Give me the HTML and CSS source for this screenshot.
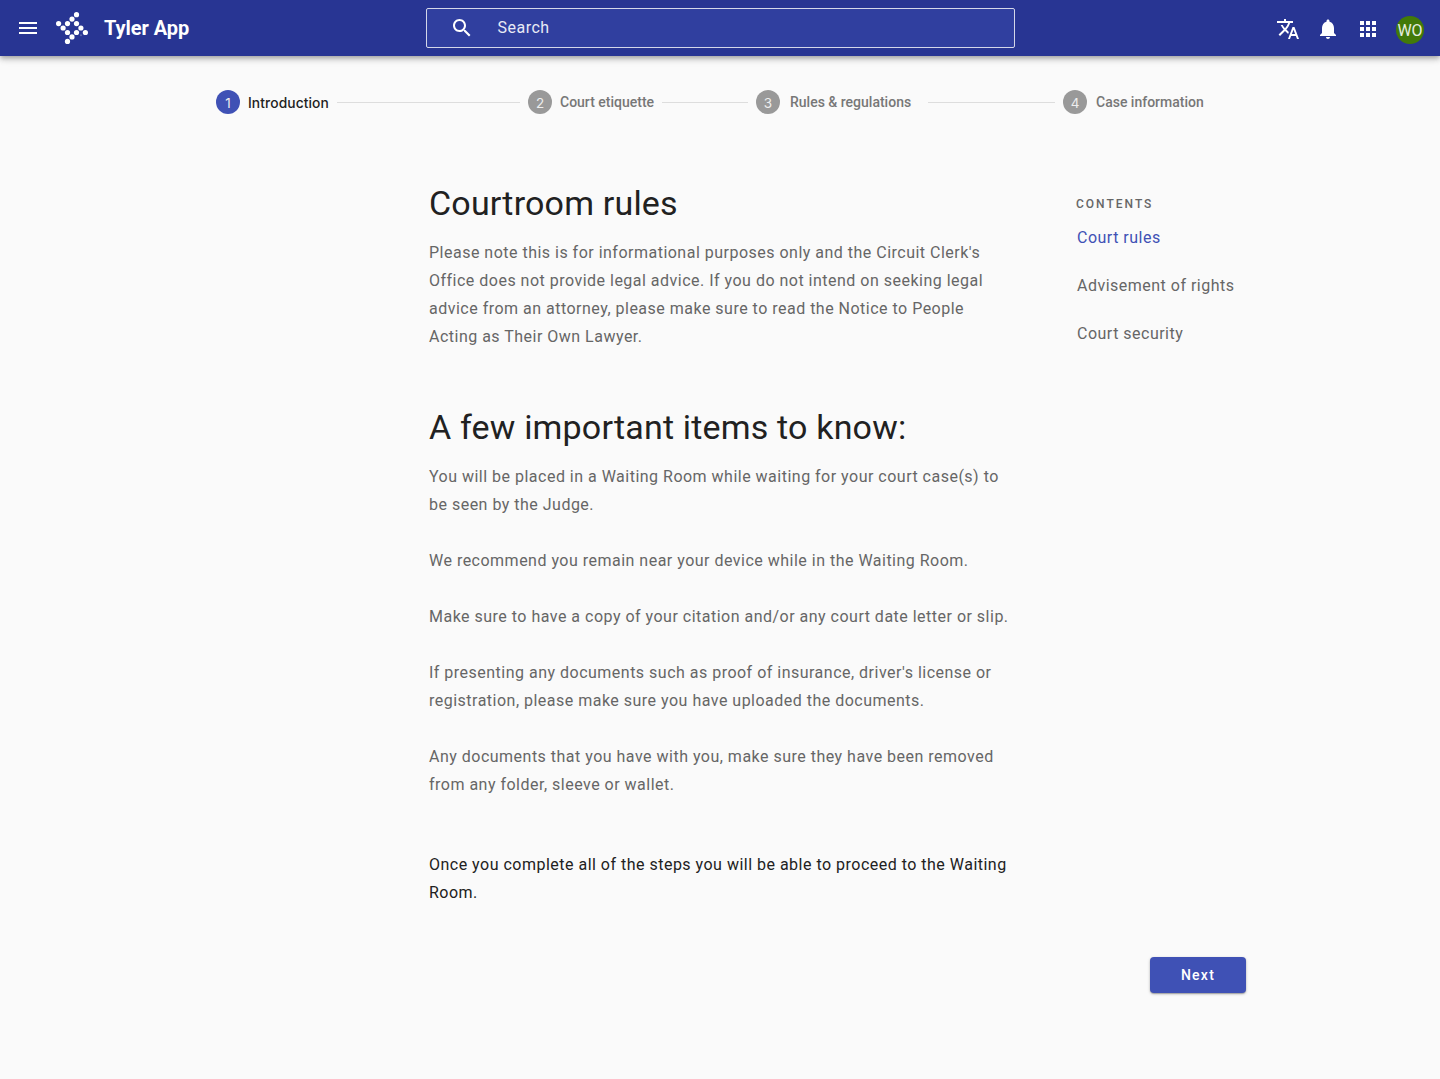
FILE: index.html
```html
<!DOCTYPE html>
<html lang="en">
<head>
<meta charset="utf-8">
<title>Tyler App</title>
<link rel="stylesheet" href="styles.css">
</head>
<body>
<header class="app-bar">
  <div class="brand">
    <svg class="icon menu" viewBox="0 0 24 24"><path d="M3 18h18v-2H3v2zm0-5h18v-2H3v2zm0-7v2h18V6H3z"/></svg>
    <svg class="logo" viewBox="0 0 32 32">
      <circle cx="20.5" cy="2.7" r="2.6"/><circle cx="16" cy="7.1" r="2.6"/>
      <circle cx="2.6" cy="11.6" r="2.6"/><circle cx="11.5" cy="11.6" r="2.6"/><circle cx="20.5" cy="11.6" r="2.6"/>
      <circle cx="7.1" cy="16" r="2.6"/><circle cx="24.9" cy="16" r="2.6"/>
      <circle cx="11.5" cy="20.5" r="2.6"/><circle cx="20.5" cy="20.5" r="2.6"/><circle cx="29.4" cy="20.5" r="2.6"/>
      <circle cx="16" cy="24.9" r="2.6"/><circle cx="11.5" cy="29.4" r="2.6"/>
      <circle cx="25" cy="23.3" r="1" opacity=".25"/>
    </svg>
    <span class="app-name">Tyler App</span>
  </div>
  <div class="search">
    <svg class="icon" viewBox="0 0 24 24"><path d="M15.5 14h-.79l-.28-.27C15.41 12.59 16 11.11 16 9.5 16 5.91 13.09 3 9.5 3S3 5.91 3 9.5 5.91 16 9.5 16c1.61 0 3.09-.59 4.23-1.57l.27.28v.79l5 4.99L20.49 19l-4.99-5zm-6 0C7.01 14 5 11.99 5 9.5S7.01 5 9.5 5 14 7.01 14 9.5 11.99 14 9.5 14z"/></svg>
    <span class="search-label">Search</span>
  </div>
  <div class="actions">
    <svg class="icon" viewBox="0 0 24 24"><path d="M12.87 15.07l-2.54-2.51.03-.03c1.74-1.94 2.98-4.17 3.71-6.53H17V4h-7V2H8v2H1v1.99h11.17C11.5 7.92 10.44 9.75 9 11.35 8.07 10.32 7.3 9.19 6.69 8h-2c.73 1.63 1.73 3.17 2.98 4.56l-5.09 5.02L4 19l5-5 3.11 3.11.76-2.04zM18.5 10h-2L12 22h2l1.12-3h4.75L21 22h2l-4.500-12zm-2.620 7l1.620-4.330L19.120 17h-3.240z"/></svg>
    <svg class="icon" viewBox="0 0 24 24"><path d="M12 22c1.100 0 2-.900 2-2h-4c0 1.100.890 2 2 2zm6-6v-5c0-3.070-1.640-5.640-4.500-6.320V4c0-.830-.670-1.500-1.500-1.500s-1.500.670-1.500 1.500v.680C7.630 5.360 6 7.920 6 11v5l-2 2v1h16v-1l-2-2z"/></svg>
    <svg class="icon" viewBox="0 0 24 24"><path d="M4 8h4V4H4v4zm6 12h4v-4h-4v4zm-6 0h4v-4H4v4zm0-6h4v-4H4v4zm6 0h4v-4h-4v4zm6-10v4h4V4h-4zm-6 4h4V4h-4v4zm6 6h4v-4h-4v4zm0 6h4v-4h-4v4z"/></svg>
    <span class="avatar">WO</span>
  </div>
</header>
<nav class="stepper">
  <div class="step step-1 active"><span class="num">1</span><span class="label">Introduction</span></div>
  <div class="step step-2"><span class="num">2</span><span class="label">Court etiquette</span></div>
  <div class="step step-3"><span class="num">3</span><span class="label">Rules &amp; regulations</span></div>
  <div class="step step-4"><span class="num">4</span><span class="label">Case information</span></div>
</nav>
<div class="page">
  <main class="content">
    <h1>Courtroom rules</h1>
    <p>Please note this is for informational purposes only and the Circuit Clerk's Office does not provide legal advice. If you do not intend on seeking legal advice from an attorney, please make sure to read the Notice to People Acting as Their Own Lawyer.</p>
    <h1 class="second">A few important items to know:</h1>
    <p>You will be placed in a Waiting Room while waiting for your court case(s) to be seen by the Judge.</p>
    <p>We recommend you remain near your device while in the Waiting Room.</p>
    <p>Make sure to have a copy of your citation and/or any court date letter or slip.</p>
    <p>If presenting any documents such as proof of insurance, driver's license or registration, please make sure you have uploaded the documents.</p>
    <p>Any documents that you have with you, make sure they have been removed from any folder, sleeve or wallet.</p>
    <p class="closing">Once you complete all of the steps you will be able to proceed to the Waiting Room.</p>
  </main>
  <aside class="contents">
    <h2>CONTENTS</h2>
    <a class="current">Court rules</a>
    <a>Advisement of rights</a>
    <a>Court security</a>
  </aside>
</div>
<footer class="footer"><button class="next">Next</button></footer>
</body>
</html>
```
FILE: styles.css
```css
* { box-sizing: border-box; }
body {
  margin: 0;
  min-height: 1079px;
  background: #fafafa;
  font-family: Roboto, sans-serif;
  font-size: 16px;
  color: #666;
}
.app-bar {
  display: grid;
  grid-template-columns: 1fr 589px 1fr;
  align-items: center;
  height: 56px;
  padding: 0 16px;
  background: #283593;
  box-shadow: 0 2px 4px -1px rgba(0,0,0,.2), 0 4px 5px rgba(0,0,0,.14), 0 1px 10px rgba(0,0,0,.12);
  color: #fff;
}
.icon { width: 24px; height: 24px; fill: #fff; flex: none; }
.brand { display: flex; align-items: center; }
.logo { width: 32px; height: 32px; margin: 0 16px; fill: #fff; }
.app-name { font-size: 20px; font-weight: 700; line-height: 24px; letter-spacing: -.05px; }
.search {
  display: flex;
  align-items: center;
  gap: 24px;
  height: 40px;
  padding: 0 23px;
  border: 1px solid #d4d7e9;
  border-radius: 2px;
  background: #303f9f;
}
.search-label { padding-bottom: 2px; letter-spacing: .5px; color: #e8eaf5; }
.actions { display: flex; align-items: center; justify-content: flex-end; gap: 16px; padding-top: 3px; }
.actions .icon { margin-bottom: 2px; }
.avatar {
  width: 28px; height: 28px;
  border-radius: 50%;
  background: #427a08;
  color: #e6eee0;
  line-height: 29px;
  text-align: center;
}
.stepper { display: flex; width: 989px; margin: 34px 0 0 216px; }
.step { display: flex; align-items: center; height: 24px; font-size: 14px; font-weight: 500; color: #777; }
.step:not(:last-child)::after { content: ""; flex: 1; height: 1px; background: #ddd; }
.step-1 { width: 312px; padding-right: 8px; }
.step-2 { width: 228px; padding-right: 8px; }
.step-3 { width: 307px; padding-right: 8px; }
.step { flex: none; }
.num {
  width: 24px; height: 24px;
  border-radius: 50%;
  background: #999;
  color: #eee;
  font: 400 13.500px/26px Inter, sans-serif;
  text-align: center;
}
.label { margin: 0 8px; white-space: nowrap; }
.step-3 .label { margin: 0 17px 0 10px; }
.step-4 .label { margin: 0 0 0 9px; }
.active { color: #222; }
.active .num { background: #3f51b5; }
.active .label { font-family: Inter, sans-serif; font-size: 13.800px; padding-top: 2px; letter-spacing: .1px; }
.page { display: flex; margin: 65px 0 0 429px; }
.content { width: 588px; }
h1 { margin: 0; font-size: 34px; line-height: 48px; font-weight: 400; letter-spacing: .18px; color: #212121; }
.second { margin-top: 48px; }
p { margin: 0 0 28px; line-height: 28px; letter-spacing: .49px; }
h1 + p { margin-top: 12px; }
.second { padding-top: 4px; }
.closing { margin: 52px 0 0; color: #212121; }
.contents { display: flex; flex-direction: column; gap: 24px; margin: 17px 0 0 60px; letter-spacing: .49px; line-height: 24px; }
.contents h2 { margin: 0 0 -10px -1px; font-size: 12px; font-weight: 500; letter-spacing: 2px; line-height: 16px; }
.current { color: #3f51b5; }
.footer { display: flex; justify-content: flex-end; margin: 50px 194px 0 0; }
.next {
  width: 96px; height: 36px;
  border: 0; border-radius: 4px;
  background: #3f51b5;
  box-shadow: 0 1px 3px rgba(0,0,0,.25), 0 1px 1px rgba(0,0,0,.2);
  color: #fff;
  font: 500 14px Roboto, sans-serif;
  letter-spacing: 1.25px;
}
```
